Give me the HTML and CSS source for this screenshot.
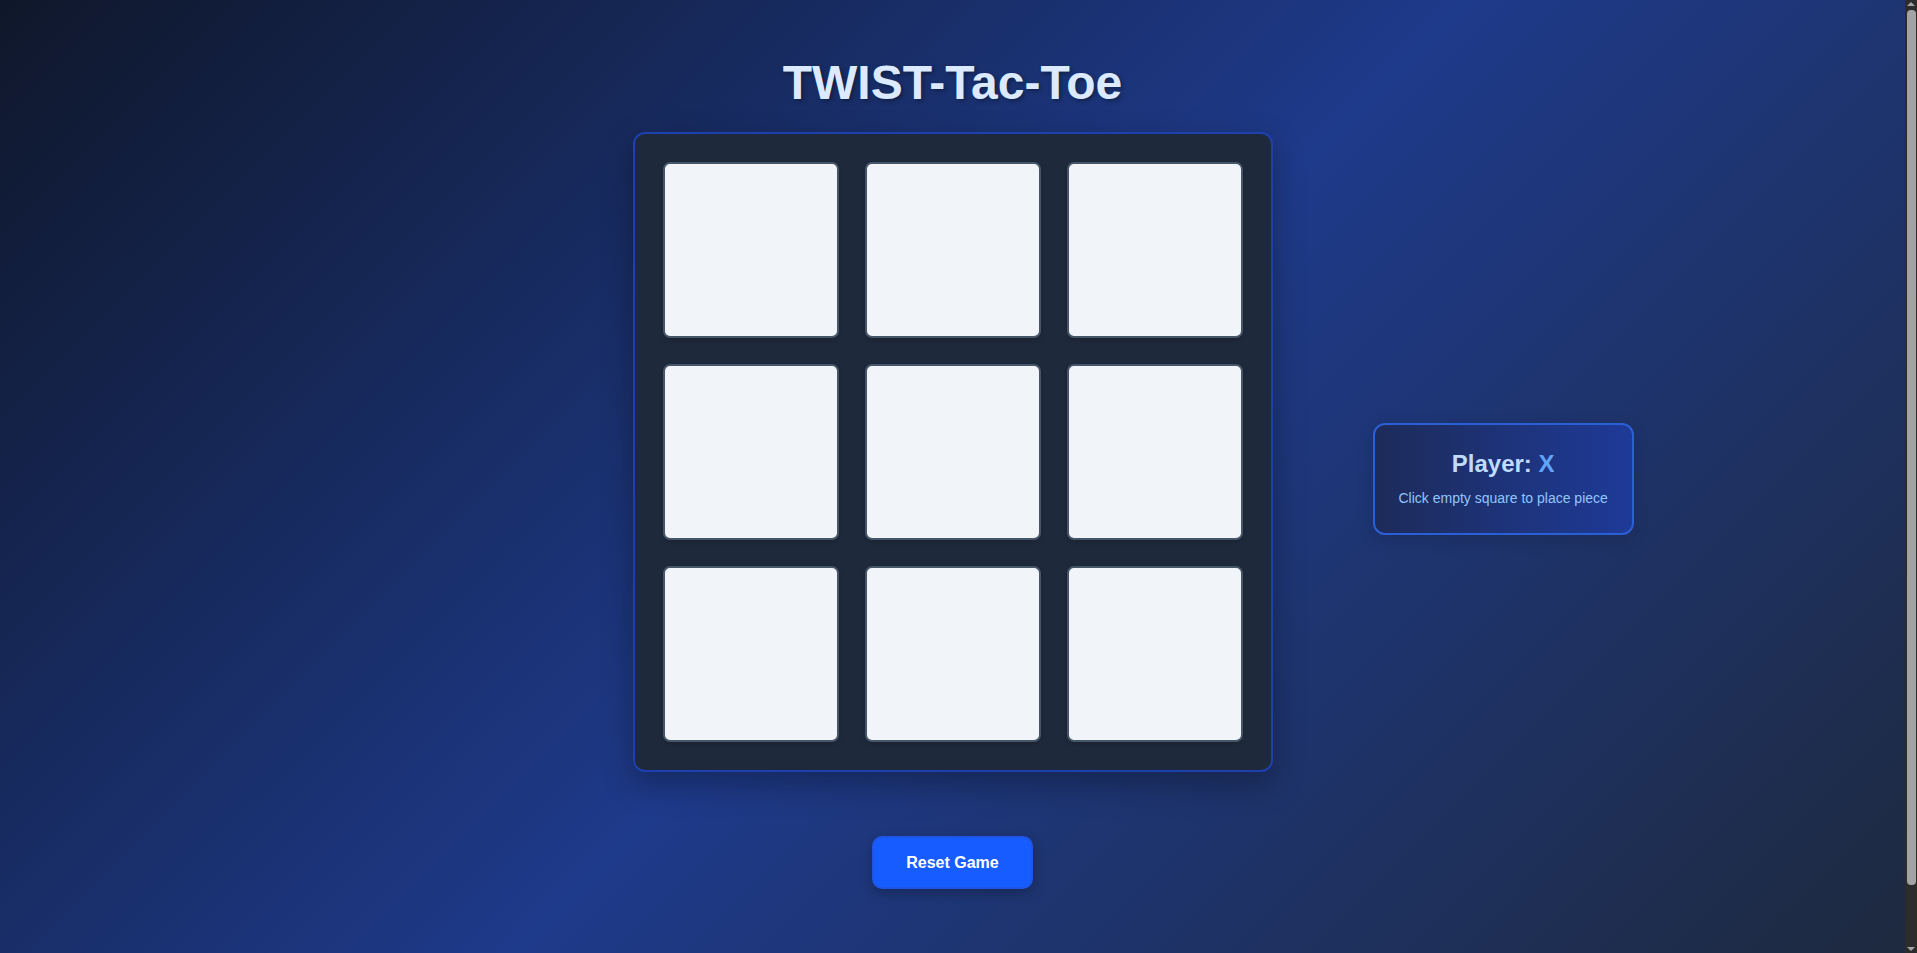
FILE: index.html
```html
<!DOCTYPE html>
<html lang="en">
<head>
<meta charset="utf-8">
<title>TWIST-Tac-Toe</title>
<link rel="stylesheet" href="styles.css">
</head>
<body>
<div class="page">
  <h1 class="title">TWIST-Tac-Toe</h1>
  <div class="game-row">
    <div class="spacer"></div>
    <div class="board">
      <div class="cell"></div>
      <div class="cell"></div>
      <div class="cell"></div>
      <div class="cell"></div>
      <div class="cell"></div>
      <div class="cell"></div>
      <div class="cell"></div>
      <div class="cell"></div>
      <div class="cell"></div>
    </div>
    <aside class="status">
      <h2 class="status-player">Player: <span class="status-mark">X</span></h2>
      <p class="status-hint">Click empty square to place piece</p>
    </aside>
  </div>
  <div class="controls">
    <button class="reset" type="button">Reset Game</button>
  </div>
</div>
<div class="scrollbar" aria-hidden="true">
  <span class="scrollbar-arrow scrollbar-arrow-up"></span>
  <span class="scrollbar-thumb"></span>
  <span class="scrollbar-arrow scrollbar-arrow-down"></span>
</div>
</body>
</html>
```

FILE: styles.css
```css
html {
  color-scheme: dark;
}

body {
  margin: 0;
  font-family: "Liberation Sans", Arial, sans-serif;
  background: linear-gradient(135deg, #0f172a 0%, #1e3a8a 50%, #1e293b 100%);
  min-height: 100vh;
}

.page {
  padding: 55px 12px 123px 0;
  display: flex;
  flex-direction: column;
  align-items: stretch;
}

.title {
  margin: 0 0 22px;
  text-align: center;
  font-size: 48px;
  line-height: 55px;
  font-weight: 700;
  color: #dbeafe;
  text-shadow: 2px 2px 4px rgba(0, 0, 0, 0.35);
}

.game-row {
  display: grid;
  grid-template-columns: 1fr auto 1fr;
  align-items: start;
}

.board {
  display: grid;
  grid-template-columns: repeat(3, 176px);
  grid-template-rows: repeat(3, 176px);
  gap: 26px;
  padding: 28px;
  background: #1e293b;
  border: 2px solid #1e40af;
  border-radius: 12px;
  box-shadow: 0 12px 32px rgba(0, 0, 0, 0.3);
}

.cell {
  box-sizing: border-box;
  background: #f1f5f9;
  border: 2px solid #475569;
  border-radius: 7px;
  box-shadow: 0 2px 4px rgba(0, 0, 0, 0.15);
}

.status {
  justify-self: start;
  margin: 291px 0 0 100px;
  padding: 24px 24px 25px;
  border: 2px solid #2b5fd6;
  border-radius: 12px;
  background: linear-gradient(90deg, #1d2b59 0%, #1e3a98 100%);
  text-align: center;
  box-shadow: 0 4px 16px rgba(0, 0, 0, 0.15);
}

.status-player {
  margin: 0 0 10px;
  font-size: 24px;
  line-height: 29px;
  font-weight: 700;
  color: #bfdbfe;
}

.status-mark {
  color: #60a5fa;
}

.status-hint {
  margin: 0;
  font-size: 14px;
  line-height: 20px;
  color: #93c5fd;
  white-space: nowrap;
}

.controls {
  display: flex;
  justify-content: center;
  margin-top: 64px;
}

.reset {
  font-family: "Liberation Sans", Arial, sans-serif;
  font-size: 16px;
  line-height: 19px;
  font-weight: 700;
  color: #ffffff;
  background: #175cff;
  border: 2px solid #1f55e6;
  border-radius: 10px;
  padding: 15px 32px;
  box-shadow: 0 4px 12px rgba(0, 0, 0, 0.25);
  cursor: pointer;
}

.scrollbar {
  position: fixed;
  top: 0;
  right: 0;
  width: 12px;
  height: 100vh;
  background: #2c2c2c;
  display: flex;
  flex-direction: column;
  align-items: center;
}

.scrollbar-arrow {
  width: 0;
  height: 0;
  border-left: 4px solid transparent;
  border-right: 4px solid transparent;
  margin: 2px 0;
}

.scrollbar-arrow-up {
  border-bottom: 4px solid #a3a3a3;
}

.scrollbar-arrow-down {
  border-top: 4px solid #a3a3a3;
  margin-top: auto;
}

.scrollbar-thumb {
  width: 9px;
  margin: 2px 0 0 1px;
  height: 875px;
  background: #a3a3a3;
  border-radius: 4px;
}
```
